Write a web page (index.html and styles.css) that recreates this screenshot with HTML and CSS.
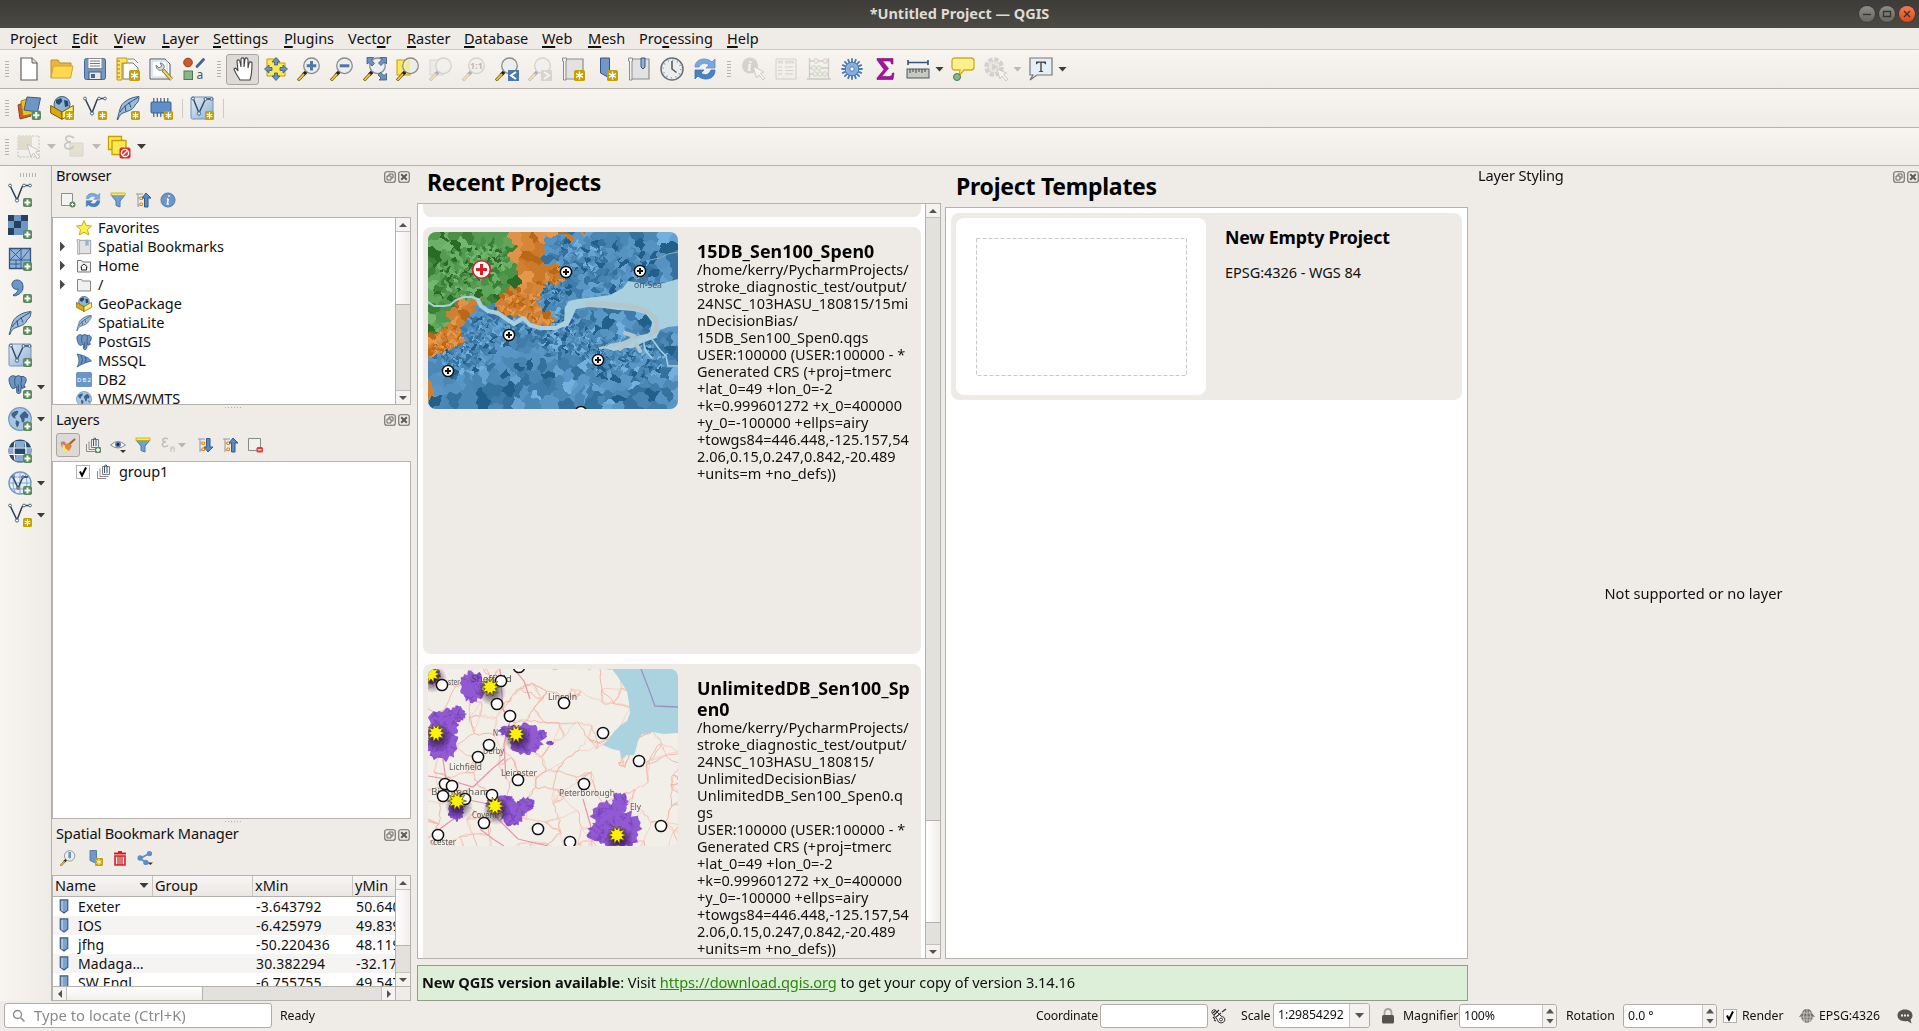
FILE: index.html
```html
<!DOCTYPE html>
<html lang="en">
<head>
<meta charset="utf-8">
<title>*Untitled Project — QGIS</title>
<link rel="stylesheet" href="styles.css">
</head>
<body>
<svg class="defs" width="0" height="0" aria-hidden="true">
<defs>
<linearGradient id="gb" x1="0" y1="0" x2="1" y2="1"><stop offset="0" stop-color="#e3ecf5"/><stop offset="1" stop-color="#8fb0d4"/></linearGradient>
<symbol id="star" viewBox="0 0 9 9"><rect width="9" height="9" rx="1.5" fill="#c4a000"/><path d="M4.5 1.2v6.6M1.7 2.9l5.6 3.2M7.3 2.9L1.7 6.1" stroke="#fff" stroke-width="1.1"/></symbol>
<symbol id="plus" viewBox="0 0 9 9"><rect width="9" height="9" rx="1.8" fill="#5a8c5a"/><path d="M4.5 1.5v6M1.5 4.5h6" stroke="#fff" stroke-width="2"/></symbol>
<symbol id="lens" viewBox="0 0 24 24"><path d="M9.5 14.5L6 18" stroke="#222" stroke-width="3.400"/><path d="M7 17l-6 6.500" stroke="#6b5a20" stroke-width="3"/><path d="M7 17l-5.500 6" stroke="#fcc72f" stroke-width="1.800"/><circle cx="14.500" cy="8.800" r="7.800" fill="#eceeec" stroke="#8c8c8c" stroke-width="1.300"/></symbol>
<symbol id="vee" viewBox="0 0 24 24"><path d="M2 2.500L9 17 14 4q1-1.500 2-1.500h6" fill="none" stroke="#2e4054" stroke-width="1.500"/><g fill="#fff" stroke="#4d6985"><circle cx="2" cy="2.500" r="1.400"/><circle cx="9" cy="17.500" r="1.600"/><circle cx="16" cy="2.500" r="1.400"/><circle cx="22" cy="2.500" r="1.400"/></g></symbol>
<symbol id="feather" viewBox="0 0 24 24"><path d="M1 23.500C4 16 3 9 10 5c4-3 8-4 13-4.500 0 4-1 6-4 8.500-1 4-6 6-11 7.500-3 1-5 3-6 7z" fill="#9bbbdc" stroke="#41607f"/><path d="M4 16C8 10 14 6 22 1.500M9 9.500l1 6M13 6.500l2 5" fill="none" stroke="#30506f"/></symbol>
<symbol id="virt" viewBox="0 0 24 24"><rect x="1" y="1" width="22" height="22" rx="1.500" fill="url(#gb)" stroke="#7392b4"/><path d="M3 2l6 15L15.500 3h6" fill="none" stroke="#2e4a66" stroke-width="1.400"/><g fill="#dce8f4" stroke="#4d6985"><circle cx="3" cy="2.500" r="1.500"/><circle cx="9" cy="17.500" r="1.700"/><circle cx="15.500" cy="3" r="1.500"/><circle cx="21.500" cy="3" r="1.400"/></g></symbol>
<symbol id="globe" viewBox="0 0 24 24"><circle cx="12" cy="12" r="11.300" fill="#a9c5e2" stroke="#6f98c4" stroke-width="1.200"/><path d="M3.500 6.500c2-2 5-3.500 7-2.500l-1 3-2.500 2.500 1 2-2.500-.5-2-2.500zM8 13l3.500 2-1 3.500-1.500 2-1.500-4zM14 6l3-2 3.500 4-1 3.500-2.500-1-1 4.500-2 .5-1-4-1.500-2.500zM18.500 14l2.500 1-1.500 3z" fill="#3d618a"/></symbol>
<symbol id="gpkg" viewBox="0 0 24 24"><circle cx="12" cy="8.500" r="8" fill="#8fb3d9" stroke="#41607f"/><path d="M6 4l5-2 1.500 3-3.500 4-3-2zM14 4l4 1 .5 5-3.500 1z" fill="#27496c"/><path d="M.7 9.500l11.300 6.500v7.300L.7 17z" fill="#dba90c" stroke="#7a5d00"/><path d="M23.300 9.500L12 16v7.300L23.300 17z" fill="#fdf06b" stroke="#7a5d00"/></symbol>
<symbol id="pg" viewBox="0 0 24 24"><path d="M2 3c3-3 6-2 8-1 3-2 5-1 6 0 4-1 7 1 7 4 0 4-3 6-3 8l2 1-4 2-1-3-1 8c-1 2-5 2-5-1v-6l-2 1c-2 2-4 1-5-1C3 13 0 7 2 3z" fill="#6a96c8" stroke="#36536f" stroke-width="1.200"/><path d="M10 2C7 6 9 10 9 14M16 2c3 4-1 7 1 12M13 12v9" fill="none" stroke="#36536f" stroke-width="1.200"/></symbol>
<symbol id="refresh" viewBox="0 0 24 24"><path d="M2 10C2 5 6 2 11 2c3 0 6 1 8 3l3-3v9h-9l3-3c-4-3-8-2-10 2z" fill="#7ba8da" stroke="#6191c9" stroke-width=".8"/><path d="M22 13c0 6-4 9-9 9-3 0-6-1-8-3l-3 3v-9h9l-3 3c4 3 8 2 10-3z" fill="#4583c3" stroke="#3a72ae" stroke-width=".8"/></symbol>
<symbol id="funnel" viewBox="0 0 16 16"><path d="M1 3h14l-5 6v6l-4-1.500V9z" fill="#729fcf" stroke="#4b7bae"/><rect x="1" y="1" width="14" height="2.500" fill="#fce94f" stroke="#b9a800" stroke-width=".7"/></symbol>
<symbol id="collapse" viewBox="0 0 16 16"><path d="M1 2h7M3 2v13M3 6h3M3 13h3" stroke="#999" fill="none"/><path d="M5 5h2.500v2.500H5zM5 11h2.500v2.500H5z" fill="#fff" stroke="#f08010"/><path d="M11 1l5 5h-3v9H9.500V6H7z" fill="#5a8bc0" stroke="#2f5d8e"/></symbol>
<symbol id="expand" viewBox="0 0 16 16"><path d="M1 2h7M3 2v13M3 6h3M3 13h3" stroke="#999" fill="none"/><path d="M5 5h2.500v2.500H5zM5 11h2.500v2.500H5z" fill="#fff" stroke="#f08010"/><path d="M9.500 1.500H13V10h3l-5 5-4-5h2.500z" fill="#5a8bc0" stroke="#2f5d8e"/></symbol>
<symbol id="group" viewBox="0 0 16 16"><path d="M1.500 7v7.500H10M4 4.500v8h8.500" fill="none" stroke="#8b8b8b"/><path d="M6.500 2.500h7v8h-7z" fill="#f2f2f0" stroke="#7c7c7c"/><path d="M8.500 9V2q1.200-2.500 2.500 0v7" fill="none" stroke="#34567a"/></symbol>
<symbol id="book" viewBox="0 0 24 24"><path d="M5 2h17v20H4" fill="#e2e2e2" stroke="#8d8d8d" stroke-width="1.200"/><path d="M1.500 1h4v3H5v19H2.500V4h-1z" fill="#f1f1f1" stroke="#8d8d8d"/></symbol>
<symbol id="flag" viewBox="0 0 10 16"><path d="M1 1h8v11l-4 3-4-3z" fill="#7ba3cf" stroke="#3d5d80" stroke-width="1.300"/><path d="M3 2v11" stroke="#b6cde5" stroke-width="1.500"/></symbol>
<symbol id="float" viewBox="0 0 12 12"><rect x=".75" y=".75" width="10.500" height="10.500" rx="2" fill="none" stroke="#6c6a67" stroke-width="1.100"/><path d="M5 5V3h4v4H7M3 5h4v4H3z" fill="none" stroke="#6c6a67"/></symbol>
<symbol id="close" viewBox="0 0 12 12"><rect x=".75" y=".75" width="10.500" height="10.500" rx="2" fill="none" stroke="#6c6a67" stroke-width="1.100"/><path d="M3.200 3.200l5.600 5.600M8.800 3.200L3.200 8.800" stroke="#5c5a57" stroke-width="2"/></symbol>
</defs>
</svg>

<header class="titlebar">
  <span class="wtitle">*Untitled Project — QGIS</span>
  <div class="wbtns"><i class="wb"><svg viewBox="0 0 16 16"><path d="M4 8.500h8"/></svg></i><i class="wb"><svg viewBox="0 0 16 16"><path d="M4.500 5.500h7v5h-7z"/></svg></i><i class="wb red"><svg viewBox="0 0 16 16"><path d="M5 5l6 6M11 5l-6 6"/></svg></i></div>
</header>
<nav class="menu"><span>Pro<u>j</u>ect</span><span><u>E</u>dit</span><span><u>V</u>iew</span><span><u>L</u>ayer</span><span><u>S</u>ettings</span><span><u>P</u>lugins</span><span>Vect<u>o</u>r</span><span><u>R</u>aster</span><span><u>D</u>atabase</span><span><u>W</u>eb</span><span><u>M</u>esh</span><span>Pro<u>c</u>essing</span><span><u>H</u>elp</span></nav>

<div class="tb">
  <i class="grip first"></i>
  <b><svg viewBox="0 0 24 24"><path d="M4 1h11l5 5v17H4z" fill="#fff" stroke="#5f5f5f" stroke-width="1.200"/><path d="M15 1v5h5" fill="#ddd" stroke="#5f5f5f"/></svg></b>
  <b><svg viewBox="0 0 24 24"><path d="M1 21V3h7l2 3h11v4" fill="#e8b73a" stroke="#b9912a"/><path d="M3.500 9H23l-2.500 12H1z" fill="#fcd94f" stroke="#d0a530"/></svg></b>
  <b><svg viewBox="0 0 24 24"><rect x="1.500" y="1.500" width="21" height="21" rx="2" fill="#7099c6" stroke="#3f6894"/><rect x="5" y="1.500" width="14" height="10" fill="#fff" stroke="#889"/><path d="M7 4h10M7 6.500h10M7 9h10" stroke="#777"/><rect x="6" y="15" width="12" height="7.500" fill="#e8e8e8" stroke="#557"/><rect x="8" y="17" width="4" height="4" fill="#3f6894"/></svg></b>
  <b><svg viewBox="0 0 24 24"><path d="M7 6h10l5 5v11H7z" fill="#fff" stroke="#777"/><path d="M1 1h10v5H6v17H1z" fill="#fce26a" stroke="#c09a10"/><path d="M1 4h3M1 8h3M1 12h3M1 16h3M1 20h3" stroke="#a08010"/><path d="M12 2h6l4 4" fill="none" stroke="#888"/><use href="#star" x="13" y="13" width="11" height="11"/></svg></b>
  <b><svg viewBox="0 0 24 24"><path d="M1 2h15l5 5v15H1z" fill="#fff" stroke="#555"/><rect x="3" y="4" width="15" height="16" fill="none" stroke="#b5cfee"/><path d="M14 13l8.500 9.500" stroke="#8a6d10" stroke-width="3.600"/><path d="M14.500 13.500l8 9" stroke="#f0d56a" stroke-width="2"/><path d="M7 8c0 5 4 6 6 5l2-2c1-2-1-5-4-5l2 3-3 2z" fill="#ddd" stroke="#777"/></svg></b>
  <b><svg viewBox="0 0 24 24"><circle cx="6" cy="5.500" r="4.300" fill="#cf5a2c" stroke="#8f3a18"/><rect x="2" y="14" width="8.500" height="8.500" fill="#85b888" stroke="#4b7a4e"/><path d="M15 9.500l6.500-7" stroke="#3f6894" stroke-width="2.800" stroke-linecap="round"/><text x="14.500" y="22" class="glyph">a</text></svg></b>
  <i class="grip"></i>
  <b class="on"><svg viewBox="0 0 24 24"><path d="M8 23c-2-4-5-7-6-11 1-2 3 0 4 2L5 4c1-2 3-1 3 1l1 5V2c1-2 3-1 3 0v8l1-8c1-2 3-1 3 1v8l1-5c1-2 3-1 3 0 0 6 0 11-2 17z" transform="translate(1 0)" fill="#fff" stroke="#444" stroke-width="1.100"/></svg></b>
  <b><svg viewBox="0 0 24 24"><path d="M3 2h11v4h7v13H3z" fill="#fce94f" stroke="#c4a000"/><g fill="#6a92c2" stroke="#35597f" stroke-width=".8"><path d="M12 .5l4 4.500h-2.500v3h-3V5H8zM12 23.500L8 19h2.500v-3h3v3H16zM.5 12L5 8v2.500h3v3H5V16zM23.500 12L19 16v-2.500h-3v-3h3V8z"/></g></svg></b>
  <b><svg viewBox="0 0 24 24"><use href="#lens"/><path d="M14.500 4v9.600M9.700 8.800h9.600" stroke="#4c78aa" stroke-width="3"/></svg></b>
  <b><svg viewBox="0 0 24 24"><use href="#lens"/><path d="M9.700 8.800h9.600" stroke="#4c78aa" stroke-width="3"/></svg></b>
  <b><svg viewBox="0 0 24 24"><use href="#lens"/><g fill="#6a92c2" stroke="#35597f" stroke-width=".8"><path d="M4 .5h6.500L8.500 3l3 3.500-2.500 2.500-3-3.500-2 1.500zM23.500.5V7l-2-2-3.500 3.500-2.500-2.500L19 2.500l-2-2zM23.500 23H16l2-2-3-3 2.500-2.500 3.500 3 2.500-2z"/></g></svg></b>
  <b><svg viewBox="0 0 24 24"><rect x="1" y="3" width="13" height="15" fill="#fce94f" stroke="#c4a000"/><use href="#lens"/><path d="M14 2.500a6.500 6.500 0 0 0 0 12.600z" fill="#f3ea8c"/></svg></b>
  <b class="off"><svg viewBox="0 0 24 24"><rect x="1" y="3" width="13" height="15" fill="#ddd" stroke="#999"/><use href="#lens"/></svg></b>
  <b class="off"><svg viewBox="0 0 24 24"><use href="#lens"/><text x="8" y="12.200" class="tiny" textLength="13">1:1</text></svg></b>
  <b><svg viewBox="0 0 24 24"><use href="#lens"/><rect x="13" y="13" width="11" height="11" fill="#4c78aa"/><path d="M21 15l-5 3.500 5 3.500" fill="none" stroke="#fff" stroke-width="2"/></svg></b>
  <b class="off"><svg viewBox="0 0 24 24"><use href="#lens"/><rect x="13" y="13" width="11" height="11" fill="#999"/><path d="M16 15l5 3.500-5 3.500" fill="none" stroke="#fff" stroke-width="2"/></svg></b>
  <b><svg viewBox="0 0 24 24"><use href="#book"/><use href="#star" x="13" y="13" width="11" height="11"/></svg></b>
  <b><svg viewBox="0 0 24 24"><path d="M6.500 1h9v20l-9-5z" fill="#6f99c8" stroke="#34567a"/><use href="#star" x="13" y="13" width="11" height="11"/></svg></b>
  <b><svg viewBox="0 0 24 24"><use href="#book"/><path d="M14 1h4v9l-2 2-2-2z" fill="#8fb3dc" stroke="#34567a"/></svg></b>
  <b><svg viewBox="0 0 24 24"><circle cx="12" cy="12" r="11" fill="#eceeee" stroke="#6d6f70" stroke-width="1.500"/><circle cx="12" cy="12" r="8.800" fill="none" stroke="#7fa9d6" stroke-width="1.500" stroke-dasharray="1.200 3.408"/><path d="M12 4v8l4.500 3.500" fill="none" stroke="#555" stroke-width="1.500"/></svg></b>
  <b><svg viewBox="0 0 24 24"><use href="#refresh"/></svg></b>
  <i class="grip"></i>
  <b class="off"><svg viewBox="0 0 24 24"><circle cx="9" cy="8.500" r="8" fill="#8a8a8a"/><text x="6.500" y="14" class="inf">i</text><path d="M12 9l3.500 12 2.500-3 4 5 2-2-4.500-4.500 3.500-1.500z" fill="#fff" stroke="#777"/></svg></b>
  <b class="off"><svg viewBox="0 0 24 24"><path d="M2 2h20v20H2z" fill="#eee" stroke="#888"/><path d="M4 5h5M11 5h9" stroke="#aaa" stroke-width="3"/><path d="M4 10h4M4 13.500h4M4 17h4M11 10h8M11 13.500h8M11 17h8" stroke="#888"/></svg></b>
  <b class="off"><svg viewBox="0 0 24 24"><path d="M2.500 1v20M21.500 1v20M2 4h20M2 11h20M2 17h20M0 22h24" stroke="#777" stroke-width="1.300"/><g fill="#ecdcdc" stroke="#977"><circle cx="9" cy="4" r="2.300"/><circle cx="18" cy="4" r="2.300"/></g><g fill="#d5e8d0" stroke="#797"><circle cx="7" cy="11" r="2.300"/><circle cx="12" cy="11" r="2.300"/><circle cx="8" cy="17" r="2.300"/><circle cx="13" cy="17" r="2.300"/><circle cx="18" cy="17" r="2.300"/></g></svg></b>
  <b><svg viewBox="0 0 24 24"><g stroke="#4a78b0" stroke-width="3" stroke-linecap="round"><path d="M12 2v20M2 12h20M4.900 4.900l14.200 14.200M19.100 4.900L4.900 19.100M8.200 2.800l7.600 18.400M15.800 2.800L8.200 21.200M2.800 8.200l18.400 7.600M2.800 15.800l18.400-7.600" stroke-width="1.800"/></g><circle cx="12" cy="12" r="6.800" fill="#86afdf" stroke="#4a78b0"/><circle cx="12" cy="12" r="2.200" fill="#fff" stroke="#4a78b0"/></svg></b>
  <b><svg viewBox="0 0 24 24"><path d="M4 1.500h16V7h-1.500C18 4.500 17 4 15 4H9.500l6 7.500-7 8H16c2 0 3-1 3.500-3.500H21l-1 6.500H4V21l7-8.500L4 3z" fill="#a8129c" stroke="#7a0c72" stroke-width=".6"/></svg></b>
  <b><svg viewBox="0 0 24 24"><path d="M1.500 5.500h21M2 3v5M22 3v5" stroke="#34567a" stroke-width="1.600"/><rect x="1" y="12" width="22" height="9" fill="#c6c8c4" stroke="#555"/><path d="M4 12v4M7 12v3M10 12v4M13 12v3M16 12v4M19 12v3" stroke="#444"/></svg></b>
  <i class="arr"></i>
  <b><svg viewBox="0 0 24 24"><path d="M4 1h16q3 0 3 3v6q0 3-3 3h-7L8 19l1-6H4q-3 0-3-3V4q0-3 3-3z" fill="#fbf08e" stroke="#cfae1a" stroke-width="1.300"/><circle cx="6" cy="20" r="3.500" fill="#85b888" stroke="#4b7a4e"/></svg></b>
  <b class="off"><svg viewBox="0 0 24 24"><circle cx="10" cy="10" r="8" fill="none" stroke="#888" stroke-width="3.500" stroke-dasharray="4.500 1.783"/><circle cx="10" cy="10" r="6" fill="#ccc" stroke="#888"/><path d="M8 6.500l6 3.500-6 3.500z" fill="#888"/><path d="M13 12l3 10 2-3 4 5 2-2-4.500-4.500 3-1.500z" fill="#fff" stroke="#777"/></svg></b>
  <i class="arr off"></i>
  <b><svg viewBox="0 0 24 24"><path d="M1 1h22v17H8l-7 5 3-5H1z" fill="#e6eff6" stroke="#777" stroke-width="1.200"/><path d="M7 4.500h10v2.700h-.8q-.4-1.500-2.500-1.500h-1v8l1.500.8v.5H9.800v-.5l1.500-.8v-8h-1q-2.100 0-2.500 1.500H7z" fill="#444"/></svg></b>
  <i class="arr"></i>
</div>

<div class="tb">
  <i class="grip first"></i>
  <b><svg viewBox="0 0 24 24"><path d="M1 9l7-3 6 14-11 3z" fill="#cd5a2b" stroke="#93401d"/><path d="M4 5l9-3 3 16-10 2z" fill="#eec01f" stroke="#a88500"/><path d="M10 1l13.500 1-3 14L7 14z" fill="#6d96c6" stroke="#3a5d83"/><use href="#plus" x="14.500" y="14.500" width="9.500" height="9.500"/></svg></b>
  <b><svg viewBox="0 0 24 24"><use href="#gpkg"/><use href="#star" x="15" y="15"  width="9" height="9"/></svg></b>
  <b><svg viewBox="0 0 24 24"><use href="#vee"/><use href="#star" x="15" y="15" width="9" height="9"/></svg></b>
  <b><svg viewBox="0 0 24 24"><use href="#feather"/><use href="#star" x="15" y="15" width="9" height="9"/></svg></b>
  <b><svg viewBox="0 0 24 24"><path d="M4 2v19M7.500 2v19M11 2v19M14.500 2v19M18 2v19" transform="translate(.8 0)" stroke="#41607f" stroke-width="1.200"/><rect x="2" y="6" width="20" height="11" rx="1" fill="#5f8fc8" stroke="#36618f"/><use href="#star" x="15" y="15" width="9" height="9"/></svg></b>
  <i class="sep"></i>
  <b><svg viewBox="0 0 24 24"><use href="#virt"/><use href="#star" x="15" y="15" width="9" height="9"/></svg></b>
  <i class="sep"></i>
</div>

<div class="tb">
  <i class="grip first"></i>
  <b class="off"><svg viewBox="0 0 24 24"><rect x="1" y="1" width="21" height="21" fill="none" stroke="#555" stroke-dasharray="2 1.500"/><path d="M1 1h14v14H1z" fill="#b5ab80"/><path d="M10 9l4 13 2.500-4 4 6 2.500-2-4.500-5 4-1z" fill="#fff" stroke="#666"/></svg></b>
  <i class="arr off"></i>
  <b class="off"><svg viewBox="0 0 24 24"><path d="M8 8h13v13H8z" fill="#c9c09a" stroke="#998"/><path d="M12 3C8 0 3 1 4 4c0 2 3 3 5 3-5 0-7 2-6 5s7 2 9-1" fill="none" stroke="#666" stroke-width="1.800"/></svg></b>
  <i class="arr off"></i>
  <b><svg viewBox="0 0 24 24"><path d="M1.500 1.500h13v13h-13z" fill="#fce94f" stroke="#c4a000" stroke-width="1.300"/><path d="M5 5.500h14v14H5z" fill="#fce94f" stroke="#c4a000" stroke-width="1.300"/><rect x="12.500" y="12.500" width="11" height="11" rx="2" fill="#e02a2a"/><circle cx="18" cy="18" r="3.600" fill="none" stroke="#fff" stroke-width="1.400"/><path d="M15.500 20.500l5-5" stroke="#fff" stroke-width="1.400"/></svg></b>
  <i class="arr"></i>
</div>

<main>
<aside class="ltools">
  <i class="hgrip"></i>
  <div><svg viewBox="0 0 24 24"><use href="#vee"/><use href="#plus" x="15" y="15" width="9" height="9"/></svg></div>
  <div><svg viewBox="0 0 24 24"><path d="M0 0h20v20H0z" fill="#6a96c8"/><path d="M0 0h6v6H0zM13 0h7v6h-7zM6 6h7v7H6zM0 13h6v7H0z" fill="#27405c"/><use href="#plus" x="15" y="15" width="9" height="9"/></svg></div>
  <div><svg viewBox="0 0 24 24"><path d="M1.500 1.500h21v20h-21z" fill="#8fb3dc" stroke="#34567a" stroke-width="1.300"/><path d="M1.500 13h21M13 1.500v11M8 13v8M13 13v8M2 2l11 11M13 2L2 13M22 2l-9 11M2 17h10" stroke="#34567a" stroke-width=".9"/><use href="#plus" x="15" y="15" width="9" height="9"/></svg></div>
  <div><svg viewBox="0 0 24 24"><path d="M4 5.500C4 2 7 1 9 1c4 0 6 3 6 7 0 5-4 8-9 9l-1-1c4-2 5-4 5-6-3 1-6-1-6-4.500z" fill="#6a96c8" stroke="#34567a"/><use href="#plus" x="15" y="15" width="9" height="9"/></svg></div>
  <div><svg viewBox="0 0 24 24"><use href="#feather"/><use href="#plus" x="15" y="15" width="9" height="9"/></svg></div>
  <div><svg viewBox="0 0 24 24"><use href="#virt"/><use href="#plus" x="15" y="15" width="9" height="9"/></svg></div>
  <div><svg viewBox="0 0 24 24"><use href="#pg" width="19" height="19"/><use href="#plus" x="15" y="15" width="9" height="9"/></svg><i class="arr"></i></div>
  <div><svg viewBox="0 0 24 24"><use href="#globe"/><use href="#plus" x="15" y="15" width="9" height="9"/></svg><i class="arr"></i></div>
  <div><svg viewBox="0 0 24 24"><circle cx="12" cy="12" r="11.500" fill="#27486c"/><path d="M7.500 2h9v6.500h-9zM1 9.500h5.500v5.500H1zM17.500 9.500H23v5.500h-5.500zM7.500 16h9v6.500h-9z" fill="#86abd4"/><path d="M1 9h22M1 15.500h22M7 2.500q-2 9 0 19M17 2.500q2 9 0 19" stroke="#fff" fill="none" stroke-width="1.100"/><use href="#plus" x="15" y="15" width="9" height="9"/></svg></div>
  <div><svg viewBox="0 0 24 24"><circle cx="12" cy="12" r="11" fill="#e6eff8" stroke="#6f98c4" stroke-width="1.400"/><path d="M12 1v22M1 12h22M3 6h18M3 18h18M7 3q-4 9 0 18M17 3q4 9 0 18" stroke="#7fa5d0" fill="none"/><path d="M5 6l5 11 5-11h5" fill="none" stroke="#2e4054" stroke-width="1.400"/><g fill="#fff" stroke="#2e4054"><circle cx="5" cy="6" r="1.200"/><circle cx="10" cy="17" r="1.200"/><circle cx="15" cy="6" r="1.200"/></g><use href="#plus" x="15" y="15" width="9" height="9"/></svg><i class="arr"></i></div>
  <div><svg viewBox="0 0 24 24"><use href="#vee"/><use href="#star" x="15" y="15" width="9" height="9"/></svg><i class="arr"></i></div>
</aside>

<section class="docks">
  <div class="dtitle t22"><span>Browser</span><svg><use href="#float"/></svg><svg><use href="#close"/></svg></div>
  <div class="dtools h29">
    <b><svg viewBox="0 0 16 16"><path d="M1.500 1.500h11v12h-11z" fill="#f4f4f0" stroke="#8c9186"/><circle cx="12.500" cy="12.500" r="3" fill="#5a8c5a"/><path d="M12.500 11v3M11 12.500h3" stroke="#fff"/></svg></b>
    <b><svg viewBox="0 0 24 24"><use href="#refresh"/></svg></b>
    <b><svg><use href="#funnel"/></svg></b>
    <b><svg><use href="#collapse"/></svg></b>
    <b><svg viewBox="0 0 16 16"><circle cx="8" cy="8" r="7" fill="#6a96c8" stroke="#4b78aa"/><path d="M9 3.200v1.600M8.300 6.800L7.300 12h1.500M6.800 7h1.500" stroke="#fff" stroke-width="1.500" fill="none"/></svg></b>
  </div>
  <div class="box browser">
    <ul class="tree">
      <li><i></i><svg viewBox="0 0 16 16"><path d="M8 .5l2.200 5 5.300.5-4 3.600 1.200 5.400L8 12.200 3.300 15l1.200-5.400L.5 6l5.300-.5z" fill="#fdf04f" stroke="#c9a91c"/></svg>Favorites</li>
      <li><i class="tri"></i><svg viewBox="0 0 24 24"><use href="#book"/><path d="M14 1h5v10l-2-2-3 2z" fill="#8fb3dc"/></svg>Spatial Bookmarks</li>
      <li><i class="tri"></i><svg viewBox="0 0 16 16"><path d="M1.500 14V2.500h4l1 1.500h8v10z" fill="#f3f3f3" stroke="#777"/><path d="M4.500 9L8 6l3.500 3M5.500 9v3h5V9" fill="none" stroke="#222"/></svg>Home</li>
      <li><i class="tri"></i><svg viewBox="0 0 16 16"><path d="M1.500 14V2.500h4l1 1.500h8v10z" fill="#f0f0f0" stroke="#888"/></svg>/</li>
      <li><i></i><svg viewBox="0 0 24 24"><use href="#gpkg"/></svg>GeoPackage</li>
      <li><i></i><svg viewBox="0 0 24 24"><use href="#feather"/></svg>SpatiaLite</li>
      <li><i></i><svg viewBox="0 0 24 24"><use href="#pg"/></svg>PostGIS</li>
      <li><i></i><svg viewBox="0 0 16 16"><path d="M1 1c6 1 11 3 14.500 7C11 9 6 11 1 14c3-5 2-9 0-13z" fill="#6a96c8" stroke="#3a5d83" stroke-width=".8"/><path d="M5 2.500q3 4 0 9M9 4q2 3 0 5.500" fill="none" stroke="#3a5d83"/></svg>MSSQL</li>
      <li><i></i><svg viewBox="0 0 16 16"><rect width="16" height="15" rx="1.500" fill="#6a96c8"/><text x="1" y="10" class="db2" textLength="14">DB2</text></svg>DB2</li>
      <li><i></i><svg viewBox="0 0 24 24"><use href="#globe"/></svg>WMS/WMTS</li>
    </ul>
    <div class="vs"><i class="sb up"></i><i class="thumb"></i><i class="track"></i><i class="sb dn"></i></div>
  </div>
  <div class="split s5"></div>
  <div class="dtitle t21"><span>Layers</span><svg><use href="#float"/></svg><svg><use href="#close"/></svg></div>
  <div class="dtools h30">
    <b class="on"><svg viewBox="0 0 16 16"><path d="M.5 5l4-1v7l-3-1z" fill="#7ba3d6"/><path d="M1.500 6l4-1-1 6-2-1z" fill="#e66a6a"/><path d="M2.500 7L8 11c-1 3-3 4-5 3z" fill="#fce94f"/><path d="M5 7l4-1 3 3-3 5-4-3z" fill="#e8833a"/><path d="M9.500 7l5.500-5" stroke="#a8642a" stroke-width="2.200"/></svg></b>
    <b><svg viewBox="0 0 16 16"><use href="#group"/><use href="#plus" x="10" y="10" width="6" height="6"/></svg></b>
    <b><svg viewBox="0 0 16 16"><path d="M.5 8Q8 1 15.500 8 8 14 .5 8z" fill="#f5f5f2" stroke="#8b8b85"/><circle cx="8" cy="7.500" r="3" fill="#5b84b5"/><circle cx="8" cy="7.500" r="1.400" fill="#222"/><path d="M10 13h6l-3 3z" fill="#333"/></svg></b>
    <b><svg><use href="#funnel"/></svg></b>
    <b class="off eps"><svg viewBox="0 0 16 16"><path d="M7 2C4 0 1 2 2 4c1 1 3 1 3 1-4 0-4 3-3 4s4 1 5-1" fill="none" stroke="#555" stroke-width="1.500"/><path d="M9 15v-4q2.500-4 5 0v4h-1.500v-3h-2v3z" fill="#888"/></svg><i class="arr"></i></b>
    <b><svg><use href="#expand"/></svg></b>
    <b><svg><use href="#collapse"/></svg></b>
    <b><svg viewBox="0 0 16 16"><path d="M1.500 1.500h12v12h-12z" fill="#f1f1ec" stroke="#888a85"/><rect x="9.500" y="10" width="6.500" height="5.500" rx="1.500" fill="#e43a3a"/><path d="M11 12.800h3.500" stroke="#fff" stroke-width="1.300"/></svg></b>
  </div>
  <div class="box layers"><div class="lrow"><span class="chk"><svg viewBox="0 0 12 12"><path d="M3 5.500l2 4L9 1.500" fill="none" stroke="#000" stroke-width="2"/></svg></span><svg class="i16"><use href="#group"/></svg>group1</div></div>
  <div class="split s6"></div>
  <div class="dtitle t21 sbm"><span>Spatial Bookmark Manager</span><svg><use href="#float"/></svg><svg><use href="#close"/></svg></div>
  <div class="dtools h29b">
    <b><svg viewBox="0 0 24 24"><use href="#lens"/><path d="M12.500 3h4v8l-2 2-2-2z" fill="#6a96c8"/></svg></b>
    <b class="w26"><svg viewBox="0 0 16 16"><path d="M3 .5h6.500v13L3 10.500z" fill="#6f99c8" stroke="#5580ae"/><use href="#star" x="8" y="8" width="8" height="8"/></svg></b>
    <b class="w22"><svg viewBox="0 0 16 16"><path d="M2 3.500h12M6 2h4" stroke="#d61f26" stroke-width="2"/><path d="M3 6h10v9H3z" fill="none" stroke="#d61f26" stroke-width="1.600"/><path d="M6 6v9M8 6v9M10 6v9" stroke="#d61f26" stroke-width="1.200"/></svg></b>
    <b class="w28"><svg viewBox="0 0 18 16"><path d="M14 3L3.500 8.500 10 13" fill="none" stroke="#5f8fc8" stroke-width="2"/><g fill="#5f8fc8"><circle cx="14" cy="3" r="3"/><circle cx="3.500" cy="8" r="3"/><circle cx="10" cy="13" r="3"/></g><path d="M12 13h6l-3 3z" fill="#333"/></svg></b>
  </div>
  <div class="box bm">
    <div class="bmrow">
      <div class="tblwrap">
        <div class="tr th"><span>Name<i class="arr"></i></span><span>Group</span><span>xMin</span><span>yMin</span></div>
        <div class="tr"><span><svg><use href="#flag"/></svg>Exeter</span><span></span><span>-3.643792</span><span>50.640</span></div>
        <div class="tr alt"><span><svg><use href="#flag"/></svg>IOS</span><span></span><span>-6.425979</span><span>49.839</span></div>
        <div class="tr"><span><svg><use href="#flag"/></svg>jfhg</span><span></span><span>-50.220436</span><span>48.119</span></div>
        <div class="tr alt"><span><svg><use href="#flag"/></svg>Madaga…</span><span></span><span>30.382294</span><span>-32.175</span></div>
        <div class="tr"><span><svg><use href="#flag"/></svg>SW Engl…</span><span></span><span>-6.755755</span><span>49.547</span></div>
      </div>
      <div class="vs"><i class="sb up"></i><i class="thumb"></i><i class="track"></i><i class="sb dn"></i></div>
    </div>
    <div class="hs"><i class="sb lf"></i><i class="thumb"></i><i class="track"></i><i class="sb rt"></i><i class="corner"></i></div>
  </div>
</section>

<section class="center">
  <div class="lists">
    <div class="col recent">
      <h1>Recent Projects</h1>
      <div class="box list">
        <div class="cards">
          <div class="card tail"></div>
          <article class="card full">
            <div class="pic"><canvas id="map1" width="250" height="177"></canvas>
              <svg viewBox="0 0 250 177">
                <text x="206" y="56" class="lbl" textLength="28" lengthAdjust="spacingAndGlyphs">on-Sea</text>
                <g fill="#fff" stroke="#111" stroke-width="1.500"><circle cx="138" cy="40" r="5.600"/><circle cx="212" cy="39" r="5.600"/><circle cx="81" cy="103" r="5.600"/><circle cx="20" cy="139" r="5.600"/><circle cx="170" cy="128" r="5.600"/><circle cx="153" cy="180" r="5.600"/></g>
                <path d="M138 37v6M135 40h6M212 36v6M209 39h6M81 100v6M78 103h6M20 136v6M17 139h6M170 125v6M167 128h6" stroke="#111" stroke-width="2"/>
                <circle cx="53.500" cy="37.500" r="8.800" fill="#fff" stroke="#d92027" stroke-width="1.600"/><path d="M53.500 32v11M48 37.500h11" stroke="#e01b24" stroke-width="3"/>
              </svg></div>
            <div class="desc"><h2 class="long">15DB_Sen100_Spen0</h2><p>/home/kerry/PycharmProjects/<br>stroke_diagnostic_test/output/<br>24NSC_103HASU_180815/15mi<br>nDecisionBias/<br>15DB_Sen100_Spen0.qgs<br>USER:100000 (USER:100000 - *<br>Generated CRS (+proj=tmerc<br>+lat_0=49 +lon_0=-2<br>+k=0.999601272 +x_0=400000<br>+y_0=-100000 +ellps=airy<br>+towgs84=446.448,-125.157,54<br>2.06,0.15,0.247,0.842,-20.489<br>+units=m +no_defs))</p></div>
          </article>
          <article class="card full">
            <div class="pic"><canvas id="map2" width="250" height="177"></canvas><svg id="pins" viewBox="0 0 250 177"></svg></div>
            <div class="desc"><h2 class="long">UnlimitedDB_Sen100_Sp<br>en0</h2><p>/home/kerry/PycharmProjects/<br>stroke_diagnostic_test/output/<br>24NSC_103HASU_180815/<br>UnlimitedDecisionBias/<br>UnlimitedDB_Sen100_Spen0.q<br>gs<br>USER:100000 (USER:100000 - *<br>Generated CRS (+proj=tmerc<br>+lat_0=49 +lon_0=-2<br>+k=0.999601272 +x_0=400000<br>+y_0=-100000 +ellps=airy<br>+towgs84=446.448,-125.157,54<br>2.06,0.15,0.247,0.842,-20.489<br>+units=m +no_defs))</p></div>
          </article>
        </div>
        <div class="vs"><i class="sb up"></i><i class="track"></i><i class="thumb"></i><i class="track2"></i><i class="sb dn"></i></div>
      </div>
    </div>
    <div class="col templates">
      <h1>Project Templates</h1>
      <div class="box list">
        <article class="card tpl">
          <div class="pic blank"><svg viewBox="0 0 250 177"><rect x="20.500" y="20.500" width="210" height="137" fill="none" stroke="#c8c8c8" stroke-dasharray="4 2"/></svg></div>
          <div class="desc"><h2>New Empty Project</h2><p>EPSG:4326 - WGS 84</p></div>
        </article>
      </div>
    </div>
  </div>
  <div class="info"><strong>New QGIS version available</strong>: Visit <a>https://download.qgis.org</a> to get your copy of version 3.14.16</div>
</section>

<section class="styling">
  <div class="dtitle t22"><span>Layer Styling</span><svg><use href="#float"/></svg><svg><use href="#close"/></svg></div>
  <div class="empty">Not supported or no layer</div>
</section>
</main>

<footer>
  <div class="locate"><svg viewBox="0 0 14 14"><circle cx="5.500" cy="5.500" r="4" fill="none" stroke="#888" stroke-width="1.300"/><path d="M8.500 8.500l4 4" stroke="#888" stroke-width="1.500"/></svg>Type to locate (Ctrl+K)</div>
  <span class="ready">Ready</span>
  <span class="st coord">Coordinate</span><div class="fld c1"></div>
  <svg class="mouse" viewBox="0 0 16 16"><path d="M1 3q1-2 3-1l6 6q4 1 4 4-1 3-4 3-3 0-4-4L1 5z" fill="#fff" stroke="#333"/><path d="M3 7l5-5M5 9l5-4M2 5l3-3M2 9l2 2M3 12l2 1M11 4l4-3" stroke="#333" stroke-width="1.300"/><circle cx="10" cy="11.500" r="1.500" fill="none" stroke="#333"/></svg>
  <span class="st scale">Scale</span><div class="fld c2"><span>1:29854292</span><i class="dd"></i></div>
  <svg class="lock" viewBox="0 0 14 16"><path d="M3.500 8V5q0-4 3.500-4t3.500 4v3" fill="none" stroke="#a5a39f" stroke-width="1.800"/><rect x="1" y="7" width="12" height="8.500" rx="1.500" fill="#555350"/></svg>
  <span class="st mag">Magnifier</span><div class="fld c3"><span>100%</span><i class="spin"></i></div>
  <span class="st rot">Rotation</span><div class="fld c4"><span>0.0 °</span><i class="spin"></i></div>
  <span class="chk f"><svg viewBox="0 0 12 12"><path d="M3 5.500l2 4L9 1.500" fill="none" stroke="#000" stroke-width="2"/></svg></span>
  <span class="st ren">Render</span>
  <svg class="crs" viewBox="0 0 16 16"><path d="M8 1q4 0 5 4l3 4h-2q-1 5-6 6-5-1-6-6H0l3-4q1-4 5-4z" fill="#77756f"/><path d="M8 1v14M1 9h14M3 5h10M3.500 12h9M5.500 3q-2 5 0 11M10.500 3q2 5 0 11" stroke="#cfccc8" stroke-width=".8" fill="none"/></svg>
  <span class="st epsg">EPSG:4326</span>
  <svg class="msg" viewBox="0 0 16 16"><path d="M8 1.500c4.500 0 7.500 2.500 7.500 6 0 2-1 3-2 4l1 4-4-2.500C4 14 .5 11 .5 7.500s3-6 7.500-6z" fill="#575552"/><path d="M4 7.500h2M7 7.500h2M10 7.500h2" stroke="#efebe7" stroke-width="1.800"/></svg>
</footer>
<script src="maps.js"></script>
</body>
</html>
```
FILE: styles.css
```css
* { box-sizing: border-box; }
body { margin: 0; width: 1919px; height: 1031px; overflow: hidden; background: #efebe7; color: #111; font: 14px/17px "Noto Sans", "Open Sans", sans-serif; letter-spacing: -.05px; display: flex; flex-direction: column; }
svg { display: block; flex: none; }
.defs { position: absolute; }
i { font-style: normal; display: block; flex: none; }
ul, h1, h2, p { margin: 0; padding: 0; list-style: none; }

.titlebar { height: 28px; flex: none; background: linear-gradient(#3c3b37, #4b4a44); display: grid; grid-template-columns: 1fr auto 1fr; align-items: center; }
.wtitle { grid-column: 2; color: #dfdbd2; font-weight: 700; font-size: 14.500px; letter-spacing: 0; padding-bottom: 2px; }
.wbtns { display: flex; gap: 4px; justify-content: flex-end; padding-right: 4px; }
.wb { width: 16px; height: 16px; border-radius: 50%; background: linear-gradient(#8e8c85, #67665f); box-shadow: 0 0 0 .5px #2d2c29; }
.wb.red { background: linear-gradient(#f37b56, #df4a16); }
.wb path { fill: none; stroke: #35342f; stroke-width: 1.300; }

.menu { height: 22px; flex: none; border-bottom: 1px solid #cfcbc6; display: grid; grid-template-columns: 62px 42px 48px 51px 71px 64px 59px 57px 78px 46px 51px 88px 60px; padding-left: 10px; line-height: 21px; font-size: 14.500px; }
.menu span { white-space: nowrap; letter-spacing: 0; }
u { text-underline-offset: 2px; text-decoration-thickness: 1.500px; }

.tb { flex: none; height: 39px; border-bottom: 1px solid #b5b1ac; background: linear-gradient(#f8f5f1, #efebe6); display: flex; align-items: center; }
.tb + .tb + .tb { height: 38px; }
.tb b { flex: none; width: 33px; height: 31px; display: flex; align-items: center; justify-content: center; }
.tb b svg { width: 24px; height: 24px; }
.tb b.on, .dtools b.on { background: #dcd9d6; border: 1px solid #a9a6a2; border-radius: 3px; }
.off { opacity: .3; }
.grip { width: 4px; height: 18px; margin: 0 5.500px 0 6px; background: radial-gradient(circle, #b5b1ac 0 .8px, transparent 1px) 0 0 / 2px 3px; }
.grip.first { margin: 0 4px 0 4.500px; }
.arr { width: 12px; height: 5px; background: #3c3b39; clip-path: polygon(1.500px 0, 10.500px 0, 6px 5px); margin-left: -1px; margin-right: 1px; }
.tb + .tb + .tb .arr { margin-left: 0; margin-right: 0; }
.sep { width: 1px; height: 19px; background: #cfcac5; margin: 0 3px 0 4px; }
.glyph { font: 12px "Noto Sans"; fill: #555; }
.tiny { font: bold 9px "Noto Sans"; fill: #333; letter-spacing: 0; }
.inf { font: italic bold 14px "Liberation Serif"; fill: #fff; }
.db2 { font: 6px "Noto Sans"; fill: #fff; letter-spacing: 0; }

main { height: 835px; flex: none; display: flex; }
.ltools { width: 52px; flex: none; border-right: 1px solid #b5b1ac; background: linear-gradient(90deg, #f8f5f1, #efebe6); padding-top: 7px; }
.hgrip { width: 17px; height: 4px; margin: 0 0 2px 19px; background: radial-gradient(circle, #b5b1ac 0 .8px, transparent 1px) 0 0 / 3px 2px; }
.ltools > div { height: 32px; padding-left: 8px; display: flex; align-items: center; }
.ltools svg { width: 24px; height: 24px; }
.ltools .arr { margin-left: 3px; }

.docks { width: 359px; flex: none; display: flex; flex-direction: column; }
.dtitle { flex: none; display: flex; align-items: center; gap: 2px; padding: 0 1px 0 4px; font-size: 14.600px; letter-spacing: -.15px; }
.dtitle span { flex: 1; padding-bottom: 2px; }
.dtitle svg { width: 12px; height: 12px; }
.t22 { height: 22px; padding-bottom: 1px; } .t21 { height: 21px; padding-bottom: 1px; }
.sbm { padding-bottom: 2px; }
.dtools { flex: none; display: flex; align-items: flex-start; gap: 1px; padding-left: 4px; }
.h29 { height: 29px; } .h30 { height: 30px; padding-top: 2px; } .h29b { height: 29px; }
.dtools b { width: 24px; height: 24px; display: flex; align-items: center; justify-content: center; flex: none; }
.dtools b.w26 { width: 28px; } .dtools b.w22 { width: 20px; } .dtools b.w28 { width: 28px; }
.dtools svg { width: 16px; height: 16px; }
.dtools b.eps { width: 36px; justify-content: flex-start; padding-left: 5px; }
.box { background: #fff; border: 1px solid #b5b1ac; display: flex; flex: none; overflow: hidden; }
.browser { height: 188px; }
.tree { flex: 1; overflow: hidden; }
.tree li { height: 19px; display: flex; align-items: center; font-size: 14.500px; white-space: nowrap; }
.tree svg { width: 16px; height: 16px; margin-right: 6px; }
.tree i { width: 23px; height: 10px; }
.tree .tri { background: #4a4947; clip-path: polygon(7px 0, 12px 5px, 7px 10px); }
.vs { width: 15px; flex: none; border-left: 1px solid #b5b1ac; display: flex; flex-direction: column; background: #e3e1de; }
.sb { width: 14px; height: 14px; background: #f5f3f1; position: relative; flex: none; }
.sb::after { content: ""; position: absolute; left: 3px; top: 5px; width: 8px; height: 4px; background: #555350; clip-path: polygon(0 100%, 50% 0, 100% 100%); }
.up { border-bottom: 1px solid #c4c0bb; }
.dn { border-top: 1px solid #c4c0bb; }
.dn::after { clip-path: polygon(0 0, 100% 0, 50% 100%); }
.lf::after, .rt::after { left: 5px; top: 3px; width: 4px; height: 8px; }
.lf { border-right: 1px solid #c4c0bb; } .rt { border-left: 1px solid #c4c0bb; }
.lf::after { clip-path: polygon(100% 0, 0 50%, 100% 100%); }
.rt::after { clip-path: polygon(0 0, 100% 50%, 0 100%); }
.thumb { background: linear-gradient(90deg, #fff, #f1eeeb); border-bottom: 1px solid #b5b1ac; }
.track { flex: 1; }
.browser .thumb { height: 73px; }
.split { flex: none; background: radial-gradient(circle, #b5b1ac 0 .8px, transparent 1px) 172px 1px / 3px 3px; background-repeat: repeat-x; clip-path: inset(0 170px 0 172px); }
.s5 { height: 5px; } .s6 { height: 6px; }
.layers { height: 358px; }
.lrow { height: 19px; display: flex; align-items: center; padding-left: 23px; font-size: 14.500px; }
.i16 { width: 16px; height: 16px; margin: 0 7px 0 6px; }
.chk { width: 14px; height: 14px; border: 1px solid #b5b1ac; background: #fff; display: block; }
.chk svg { width: 12px; height: 12px; }
.bm { height: 126px; flex-direction: column; }
.bmrow { height: 110px; display: flex; }
.tblwrap { flex: 1; overflow: hidden; }
.tr { display: grid; grid-template-columns: 100px 100px 100px 100px; height: 19px; align-items: center; font-size: 14px; line-height: 15px; letter-spacing: .15px; white-space: nowrap; padding-bottom: 1px; }
.tr.alt { background: #f5f4f3; }
.tr span { display: flex; align-items: center; padding-left: 3px; }
.tr svg { width: 10px; height: 15px; margin: 0 9px 0 3px; }
.tr.th { height: 21px; background: linear-gradient(#f8f6f4, #eae7e3); border-bottom: 1px solid #b5b1ac; font-size: 14.500px; letter-spacing: 0; padding: 0; }
.th span { height: 20px; padding: 0 0 1px 2px; border-right: 1px solid #c9c5c0; }
.th .arr { margin-left: auto; margin-right: 2px; }
.bm .vs .thumb { height: 56px; }
.hs { height: 15px; border-top: 1px solid #b5b1ac; display: flex; background: #e3e1de; }
.hs .thumb { width: 136px; border: 0; border-right: 1px solid #b5b1ac; background: linear-gradient(#fff, #f1eeeb); }
.corner { width: 15px; background: #efebe7; border-left: 1px solid #b5b1ac; }

.center { width: 1051px; flex: none; margin-left: 6px; display: flex; flex-direction: column; }
.lists { display: flex; gap: 4px; height: 793px; }
.col { display: flex; flex-direction: column; }
.recent { width: 524px; } .templates { width: 523px; }
h1 { font-size: 23px; letter-spacing: -.25px; padding-left: 10px; flex: none; white-space: nowrap; color: #000; }
.recent h1 { height: 37px; line-height: 33px; }
.templates h1 { height: 41px; line-height: 40px; padding-left: 11px; }
.list { flex: 1; min-height: 0; }
.cards { flex: 1; padding-left: 5px; }
.card { width: 498px; background: #eeebe6; border-radius: 8px; display: flex; padding: 5px; margin-bottom: 10px; }
.tail { height: 13px; border-radius: 0 0 8px 8px; padding: 0; }
.full { height: 427px; }
.pic { width: 250px; height: 177px; border-radius: 8px; overflow: hidden; display: grid; flex: none; }
.pic > * { grid-area: 1 / 1; }
.pic svg { width: 250px; height: 177px; overflow: hidden; }
.blank { background: #fff; }
.desc { margin-left: 19px; padding-top: 9px; white-space: nowrap; }
.desc h2 { font-size: 17.800px; line-height: 21px; letter-spacing: -.2px; color: #000; }
.desc h2.long { letter-spacing: .1px; }
.desc p { font-size: 14.500px; line-height: 17px; letter-spacing: .05px; margin-top: -1px; }
.tpl { width: 511px; height: 187px; margin: 5px; }
.tpl .desc h2 { padding-bottom: 17px; }
.tpl .desc p { letter-spacing: -.05px; }
.recent .vs .thumb { height: 103px; border-top: 1px solid #b5b1ac; }
.recent .track2 { height: 21px; }
.info { height: 36px; margin-top: 6px; border: 1px solid #8a9f84; background: #ddefd8; padding-left: 4px; line-height: 32px; font-size: 14.600px; }
.info a { color: #2c8a0b; text-decoration: underline; }
.lbl { font: 9px "Noto Sans"; fill: #444; fill-opacity: .85; letter-spacing: 0; }

.styling { flex: 1; display: flex; flex-direction: column; }
.styling .dtitle { padding: 0 0 1px 10px; }
.empty { flex: 1; display: grid; place-items: center; padding-bottom: 3px; font-size: 14.600px; letter-spacing: 0; }

footer { flex: none; height: 30px; display: flex; align-items: center; padding-left: 4px; padding-bottom: 1px; }
.locate { width: 268px; height: 25px; border: 1px solid #b0aca7; border-radius: 3px; background: #fff; color: #8a8a8a; display: flex; align-items: center; font-size: 14.800px; letter-spacing: 0; }
.locate svg { width: 14px; height: 14px; margin: 0 8px 0 7px; }
.ready, .st { font-size: 12.300px; letter-spacing: -.05px; white-space: nowrap; flex: none; }
.ready { margin-left: 8px; width: 756px; }
.fld { height: 24px; background: #fff; border: 1px solid #b0aca7; border-radius: 3px; display: flex; font-size: 12.300px; line-height: 21px; flex: none; }
.fld span { flex: 1; padding-left: 4px; letter-spacing: -.1px; }
.coord { width: 64px; letter-spacing: -.2px; }
.c1 { width: 108px; }
.mouse { width: 16px; height: 16px; margin: 0 14px 0 3px; }
.scale { width: 32px; }
.c2 { width: 97px; height: 25px; line-height: 22px; }
.dd, .spin { position: relative; border-left: 1px solid #c9c5c0; background: #f4f2ef; border-radius: 0 3px 3px 0; }
.dd { width: 20px; } .spin { width: 14px; }
.dd::after { content: ""; position: absolute; left: 5px; top: 9px; width: 9px; height: 5px; background: #555; clip-path: polygon(0 0, 100% 0, 50% 100%); }
.spin::before, .spin::after { content: ""; position: absolute; left: 3px; top: 4px; width: 8px; height: 5px; background: #555; clip-path: polygon(0 100%, 50% 0, 100% 100%); }
.spin::after { top: 14px; clip-path: polygon(0 0, 100% 0, 50% 100%); }
.lock { width: 14px; height: 16px; margin: 0 8px 0 11px; }
.mag { width: 56px; } .c3 { width: 98px; }
.rot { margin-left: 9px; width: 57px; } .c4 { width: 94px; }
.f { margin: 0 5px 0 6px; flex: none; }
.ren { width: 57px; }
.crs { width: 16px; height: 16px; margin-right: 4px; }
.epsg { width: 78px; }
.msg { width: 16px; height: 16px; }
```
FILE: maps.js
```js
// Thumbnails for the recent project cards.
function rng(seed) {
  return function () {
    seed = (seed * 1664525 + 1013904223) >>> 0;
    return seed / 4294967296;
  };
}
function inside(poly, x, y) {
  var hit = false;
  for (var i = 0, j = poly.length - 1; i < poly.length; j = i++) {
    var a = poly[i], b = poly[j];
    if ((a[1] > y) !== (b[1] > y) && x < (b[0] - a[0]) * (y - a[1]) / (b[1] - a[1]) + a[0]) hit = !hit;
  }
  return hit;
}
function trace(c, pts) {
  c.beginPath();
  pts.forEach(function (p, i) { i ? c.lineTo(p[0], p[1]) : c.moveTo(p[0], p[1]); });
}
function hex(h) { return [parseInt(h.slice(1, 3), 16), parseInt(h.slice(3, 5), 16), parseInt(h.slice(5, 7), 16)]; }

// Catchment map of the Thames estuary: cells coloured by zone.
(function () {
  var W = 250, H = 177, r = rng(11);
  var c = document.getElementById('map1').getContext('2d');
  var green = [[0,0],[85,0],[88,12],[80,20],[90,37],[101,51],[82,52],[70,63],[62,77],[55,72],[45,65],[30,66],[22,85],[20,95],[0,102]];
  var orange = [
    [[85,0],[130,0],[116,14],[117,25],[130,30],[134,50],[115,52],[112,66],[103,68],[112,82],[125,86],[124,93],[105,96],[95,86],[75,84],[65,76],[70,63],[82,52],[101,51],[90,37],[80,20],[88,12]],
    [[30,66],[47,68],[45,80],[38,90],[32,98],[36,112],[20,118],[0,123],[0,102],[20,95],[22,82]],
    [[0,155],[6,166],[4,174],[0,174]], [[136,0],[155,0],[140,7]]
  ];
  var pal = {
    g: ['#6cb068', '#559b51', '#4b9047', '#5fa65a', '#3a8037', '#74b66f', '#519a4d', '#2a6b25'],
    o: ['#e5974a', '#d68636', '#ca7a28', '#b96816', '#e0924a', '#d08032'],
    b: ['#4b88b6', '#4b88b6', '#5a97c8', '#66a2d1', '#3f7cab', '#5591c1', '#35719c', '#4885b3', '#22608c', '#72b0df', '#35739f', '#5896c6']
  };
  var seeds = [], clusters = [[30,42,26],[60,30,20],[90,78,22],[150,22,25],[22,112,22],[40,120,24],[125,100,22],[215,130,22],[190,40,30],[160,115,18],[60,95,20],[125,60,14],[180,125,22]];
  for (var i = 0; i < 2100; i++) {
    var x = r() * W, y = r() * H;
    if (i > 480) {
      var k = clusters[i % clusters.length], a = r() * 6.283, d = Math.sqrt(r()) * k[2];
      x = k[0] + Math.cos(a) * d; y = k[1] + Math.sin(a) * d;
    }
    var z = inside(green, x, y) ? 'g' : orange.some(function (p) { return inside(p, x, y); }) ? 'o' : 'b';
    seeds.push([x, y, hex(pal[z][Math.floor(r() * pal[z].length)])]);
  }
  var im = c.createImageData(W, H);
  for (var py = 0; py < H; py++) for (var px = 0; px < W; px++) {
    // a small wobble keeps cell edges from being ruler straight
    var wx = px + Math.sin(py * .7 + px * .3) * 1.1, wy = py + Math.cos(px * .6 - py * .2) * 1.1;
    var best = 1e9, s = null;
    for (var n = 0; n < seeds.length; n++) {
      var dx = seeds[n][0] - wx, dy = seeds[n][1] - wy, q = dx * dx + dy * dy;
      if (q < best) { best = q; s = seeds[n]; }
    }
    var o = (py * W + px) * 4;
    im.data[o] = s[2][0]; im.data[o + 1] = s[2][1]; im.data[o + 2] = s[2][2]; im.data[o + 3] = 255;
  }
  c.putImageData(im, 0, 0);
  c.fillStyle = c.strokeStyle = '#a9d0de';
  c.lineJoin = c.lineCap = 'round';
  trace(c, [[136,90],[137,75],[141,69],[150,67],[167,65],[182,63],[195,56],[200,49],[212,51],[222,54],[236,51],[250,47],[250,94],[240,95],[232,98],[228,106],[214,111],[205,116],[196,116],[186,119],[176,116],[182,112],[202,108],[214,103],[222,101],[224,90],[218,82],[205,79],[190,78],[176,76],[160,75],[148,77],[144,86],[140,94],[128,97]]);
  c.fill();
  c.lineWidth = 2;
  trace(c, [[0,70],[6,74],[16,74],[22,73],[28,68],[36,65],[44,65],[50,68]]); c.stroke();
  c.lineWidth = 4;
  trace(c, [[50,68],[53,74],[60,79],[70,81],[77,86],[86,92],[95,86],[102,93],[113,96],[128,96],[138,90]]); c.stroke();
  c.strokeStyle = '#b2c6cb'; c.lineWidth = 5;
  trace(c, [[160,72],[175,72],[200,74],[216,78],[227,86],[229,97],[222,103]]); c.stroke();
  c.lineWidth = 2.5;
  trace(c, [[214,104],[204,107],[194,111],[180,115],[172,116]]); c.stroke();
  c.lineWidth = 4;
  trace(c, [[197,101],[206,104],[200,111],[192,117]]); c.stroke();
  trace(c, [[208,112],[212,119]]); c.stroke();
  c.strokeStyle = '#a9d0de'; c.lineWidth = 1.5;
  trace(c, [[215,105],[217,118],[224,126]]); c.stroke();
  trace(c, [[224,107],[232,118],[238,124],[240,134],[250,134]]); c.stroke();
  c.strokeStyle = '#8fa9b8'; c.lineWidth = 1;
  trace(c, [[222,28],[232,26],[240,22],[250,20]]); c.stroke();
})();

// Road map of the Midlands with service areas.
(function () {
  var r = rng(5), c = document.getElementById('map2').getContext('2d');
  c.fillStyle = '#f2efe9'; c.fillRect(0, 0, 250, 177);
  var nodes = [];
  for (var gx = -1; gx < 16; gx++) for (var gy = -1; gy < 12; gy++)
    nodes.push([gx * 17 + (r() - .5) * 15, gy * 17 + (r() - .5) * 15]);
  nodes.forEach(function (a, i) {
    nodes.map(function (b, j) { return [Math.hypot(a[0] - b[0], a[1] - b[1]), b, j]; })
      .filter(function (e) { return e[2] !== i; })
      .sort(function (m, n) { return m[0] - n[0]; }).slice(0, 3)
      .forEach(function (e) {
        var b = e[1];
        c.beginPath(); c.moveTo(a[0], a[1]);
        for (var t = 1; t < 4; t++) c.lineTo(a[0] + (b[0] - a[0]) * t / 4 + (r() - .5) * 3, a[1] + (b[1] - a[1]) * t / 4 + (r() - .5) * 3);
        c.lineTo(b[0], b[1]);
        c.strokeStyle = r() < .4 ? '#f3b3a3' : '#f5cfc4'; c.lineWidth = .9; c.stroke();
      });
  });
  c.strokeStyle = '#ec93ab'; c.lineWidth = 1.2;
  [[[86,0],[96,12],[102,30]],[[72,0],[75,40],[82,52],[76,75],[78,110]],[[14,85],[18,110],[45,118],[64,100],[76,90]],[[0,107],[18,110],[36,130],[60,135],[70,150],[90,170],[120,177]],[[52,160],[65,170],[76,177]],[[28,148],[12,160],[4,177]],[[155,130],[163,158]]]
    .forEach(function (p) { trace(c, p); c.stroke(); });
  c.fillStyle = '#aad3df';
  trace(c, [[184,0],[190,8],[195,16],[199,22],[201,34],[202,44],[199,52],[193,56],[186,63],[179,72],[175,76],[184,80],[192,82],[193,90],[199,86],[206,86],[208,80],[210,72],[214,65],[225,63],[235,65],[250,64],[250,0]]); c.fill();
  c.strokeStyle = '#9b93c4'; c.lineWidth = 1.3;
  trace(c, [[213,0],[220,18],[227,37],[250,38]]); c.stroke();
  [[44,18,13,16],[15,56,15,16],[14,74,17,18],[29,45,9,8],[82,62,11,6],[98,70,18,16],[113,66,6,5],[122,74,4,2],[28,142,8,10],[74,134,16,9],[84,144,12,13],[98,136,9,8],[178,146,15,14],[192,134,8,11],[190,160,24,20],[172,164,13,10],[3,6,9,9]]
    .forEach(function (b) {
      var pts = [];
      for (var a = 0; a < 6.28; a += .17) { var k = .78 + r() * .34; pts.push([b[0] + Math.cos(a) * b[2] * k, b[1] + Math.sin(a) * b[3] * k]); }
      c.fillStyle = '#9159d2'; trace(c, pts); c.closePath(); c.fill();
      c.save(); c.clip(); c.strokeStyle = '#7440b8'; c.lineWidth = .6;
      for (var n = 0; n < b[2] * 1.8; n++) {
        var x = b[0] + (r() - .5) * b[2] * 2, y = b[1] + (r() - .5) * b[3] * 2;
        trace(c, [[x, y], [x + (r() - .5) * 9, y + (r() - .5) * 9], [x + (r() - .5) * 10, y + (r() - .5) * 10]]); c.stroke();
      }
      c.restore();
    });
  var stars = [[62,18],[8,64],[88,65],[29,132],[67,137],[189,166],[3,5]];
  stars.forEach(function (s) {
    var g = c.createRadialGradient(s[0] + 1, s[1] + 3, 2, s[0] + 2, s[1] + 5, 14);
    g.addColorStop(0, 'rgba(20,0,40,.75)'); g.addColorStop(1, 'rgba(20,0,40,0)');
    c.fillStyle = g; c.fillRect(s[0] - 18, s[1] - 18, 36, 38);
  });
  var out = '';
  [['Sheffield',43,13,41],['ster',20,16,12],['Lincoln',120,31,29],['N',65,67,5],['Derby',55,85,21],['Lichfield',21,101,33],['Leicester',73,107,36],['Birmingham',3,126,58],['Peterborough',131,127,56],['Coventry',44,149,32],['Ely',202,141,11],['rcester',2,176,26]]
    .forEach(function (t) { out += '<text class="lbl" lengthAdjust="spacingAndGlyphs" x="' + t[1] + '" y="' + t[2] + '" textLength="' + t[3] + '">' + t[0] + '</text>'; });
  [[14,16],[73,12],[69,35],[82,47],[136,34],[91,-2],[175,64],[61,76],[50,88],[211,92],[17,115],[24,117],[15,127],[37,130],[90,111],[156,115],[64,126],[56,154],[110,160],[142,173],[233,157],[10,166]]
    .forEach(function (p) { out += '<circle cx="' + p[0] + '" cy="' + p[1] + '" r="5.600" fill="#fff" stroke="#111" stroke-width="1.500"/>'; });
  stars.forEach(function (s) {
    var p = [];
    for (var i = 0; i < 20; i++) {
      var a = i * Math.PI / 10, q = i % 2 ? 5 : 9.5;
      p.push((s[0] + Math.cos(a) * q).toFixed(1) + ',' + (s[1] + Math.sin(a) * q).toFixed(1));
    }
    out += '<polygon points="' + p.join(' ') + '" fill="#fff200" stroke="#4a4500" stroke-width=".7"/>';
  });
  document.getElementById('pins').innerHTML = out;
})();
```
